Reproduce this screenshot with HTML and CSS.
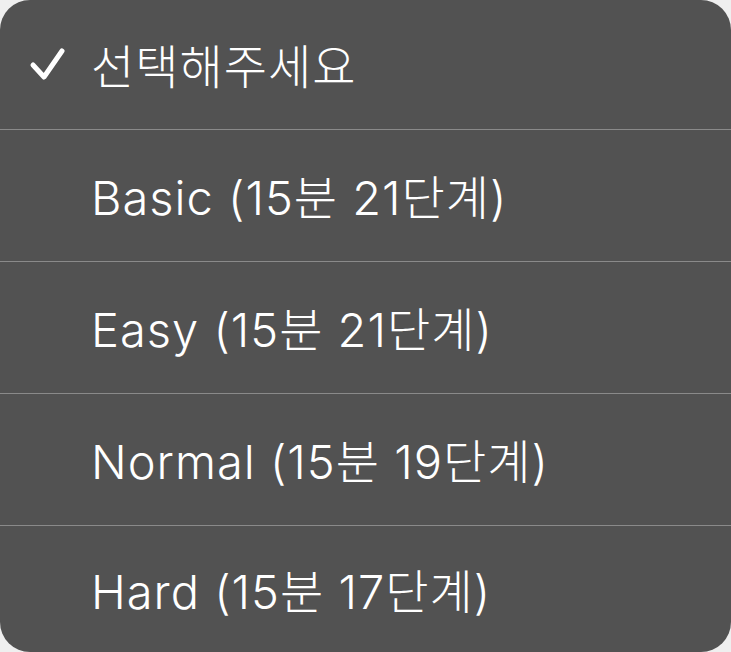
FILE: index.html
```html
<!DOCTYPE html>
<html lang="ko">
<head>
<meta charset="utf-8">
<link rel="stylesheet" href="styles.css">
</head>
<body>
<div class="menu">
  <div class="item selected">
    <span class="check"><svg width="40" height="40" viewBox="0 0 40 40"><path d="M5 20 L16 32 L34 6" fill="none" stroke="#fff" stroke-width="5" stroke-linecap="round" stroke-linejoin="round"/></svg></span>
    <span class="label">선택해주세요</span>
  </div>
  <div class="item"><span class="check"></span><span class="label">Basic (15분 21단계)</span></div>
  <div class="item"><span class="check"></span><span class="label">Easy (15분 21단계)</span></div>
  <div class="item"><span class="check"></span><span class="label">Normal (15분 19단계)</span></div>
  <div class="item"><span class="check"></span><span class="label">Hard (15분 17단계)</span></div>
</div>
</body>
</html>
```
FILE: styles.css
```css
html, body { margin: 0; padding: 0; background: #efefef; }
.menu {
  width: 731px;
  height: 652px;
  background: #525252;
  border-radius: 30px;
  overflow: hidden;
  display: flex;
  flex-direction: column;
}
.item {
  height: 132px;
  flex: none;
  display: flex;
  align-items: center;
  border-bottom: 1px solid #8a8a8a;
  box-sizing: border-box;
}
.item:first-child { height: 130px; }
.item:last-child { border-bottom: none; flex: 1; }
.check {
  width: 91px;
  padding-left: 28px;
  box-sizing: border-box;
  display: flex;
  align-items: center;
}
.label {
  color: #fff;
  font-family: Inter, "Noto Sans CJK KR", sans-serif;
  font-size: 47px;
  font-weight: 300;
  letter-spacing: 1px;
  margin-top: -2px;
}
```
